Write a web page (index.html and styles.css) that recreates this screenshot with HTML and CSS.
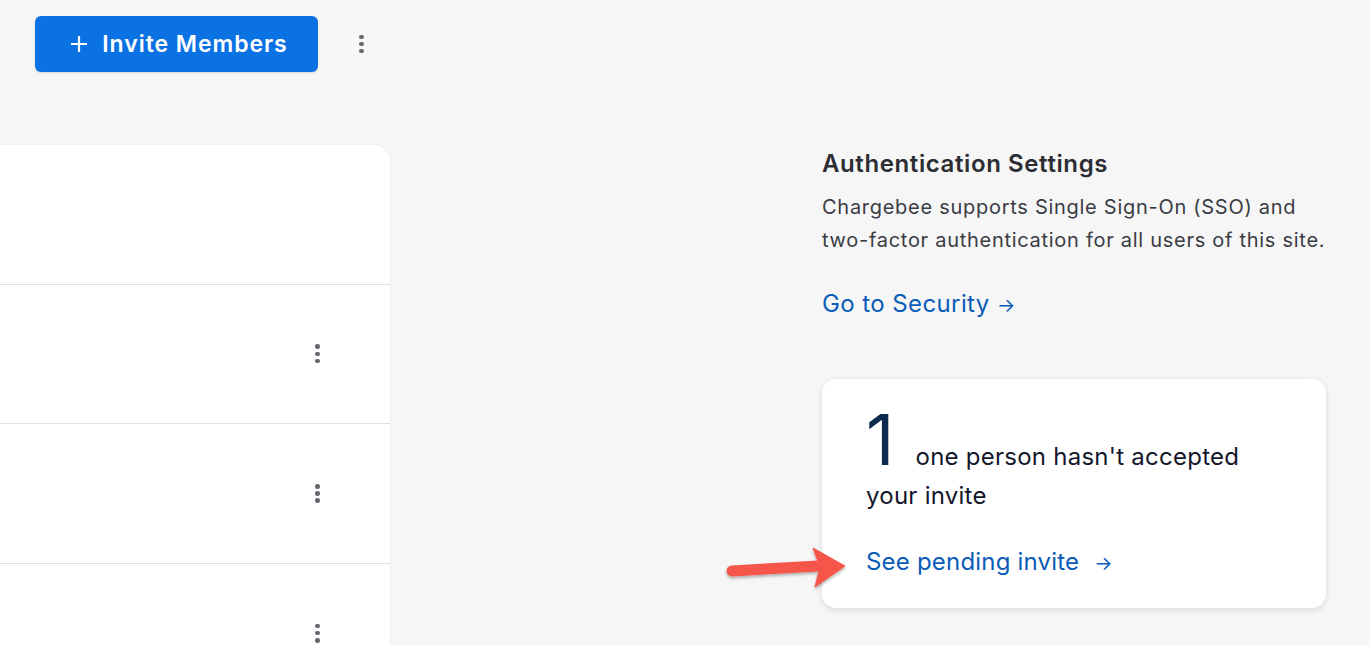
FILE: index.html
```html
<!DOCTYPE html>
<html>
<head>
<meta charset="utf-8">
<link rel="stylesheet" href="styles.css">
</head>
<body>
<div class="page">
  <div class="topbar">
    <button class="invite-btn">
      <svg class="plus" width="18" height="18" viewBox="0 0 18 18"><path d="M9 1v16M1 9h16" stroke="#fff" stroke-width="2.2" fill="none"/></svg>
      <span>Invite Members</span>
    </button>
    <div class="kebab top-kebab"><i></i><i></i><i></i></div>
  </div>
  <div class="main">
    <div class="members-card">
      <div class="row head-row"></div>
      <div class="row"><div class="kebab"><i></i><i></i><i></i></div></div>
      <div class="row"><div class="kebab"><i></i><i></i><i></i></div></div>
      <div class="row"><div class="kebab"><i></i><i></i><i></i></div></div>
    </div>
    <div class="side">
      <h2 class="side-title">Authentication Settings</h2>
      <p class="side-text">Chargebee supports Single Sign-On (SSO) and two-factor authentication for all users of this site.</p>
      <a class="link security-link">Go to Security <span class="arr">&rarr;</span></a>
      <div class="pending-card">
        <p class="pending-text"><span class="big">1</span> one person hasn't accepted your invite</p>
        <a class="link pending-link">See pending invite <span class="arr">&rarr;</span></a>
      </div>
    </div>
  </div>
  <svg class="annot" width="140" height="60" viewBox="0 0 140 60">
    <defs><filter id="sh" x="-20%" y="-30%" width="140%" height="160%"><feDropShadow dx="0" dy="2" stdDeviation="1.5" flood-color="#000" flood-opacity="0.3"/></filter></defs>
    <g filter="url(#sh)" fill="#f5574a" stroke="#f5574a">
      <path d="M12 31 L98 26" stroke-width="11" stroke-linecap="round" fill="none"/>
      <path d="M93 8 L125 26 L95 47 L100 27 Z" stroke-width="1" stroke-linejoin="round"/>
    </g>
  </svg>
</div>
</body>
</html>
```
FILE: styles.css
```css
html, body {
  margin: 0;
  padding: 0;
  background: #f6f6f6;
  font-family: Inter, "Noto Sans", sans-serif;
  overflow: hidden;
}
.page {
  position: relative;
  width: 1370px;
  height: 646px;
  overflow: hidden;
}
.topbar {
  display: flex;
  align-items: center;
  padding: 16px 0 0 35px;
  gap: 41px;
}
.invite-btn {
  width: 283px;
  height: 56px;
  display: flex;
  align-items: center;
  justify-content: center;
  gap: 14px;
  background: #0b72e3;
  color: #fff;
  border: none;
  border-radius: 6px;
  font-family: Inter, sans-serif;
  font-size: 23px;
  font-weight: 600;
  letter-spacing: 0.95px;
  box-shadow: 0 1px 2px rgba(0,0,0,0.12);
  padding: 0 0 0 5px;
}
.kebab {
  display: flex;
  flex-direction: column;
  gap: 2.6px;
  width: 5px;
}
.kebab i {
  display: block;
  width: 4.6px;
  height: 4.6px;
  border-radius: 50%;
  background: #64676f;
}
.main {
  display: flex;
  margin-top: 73px;
}
.members-card {
  width: 390px;
  height: 520px;
  background: #fff;
  border-radius: 0 16px 0 0;
  box-shadow: 0 0 3px rgba(0,0,0,0.06);
  flex-shrink: 0;
}
.row {
  height: 138.6px;
  border-bottom: 1px solid #dedfe3;
  display: flex;
  align-items: center;
  justify-content: flex-end;
  padding-right: 70px;
}
.side {
  margin-left: 432px;
  width: 510px;
  padding-top: 5px;
}
.side-title {
  margin: 0;
  font-size: 24px;
  font-weight: 600;
  color: #2c2d33;
  line-height: 28px;
  letter-spacing: 0.6px;
}
.side-text {
  margin: 13px 0 0;
  font-size: 20px;
  line-height: 33px;
  color: #3a3c44;
  letter-spacing: 0.72px;
}
.link {
  color: #0a5cb8;
  text-decoration: none;
  display: inline-block;
}
.arr {
  font-size: 0.8em;
}
.security-link {
  margin-top: 32px;
  font-size: 24px;
  line-height: 30px;
  letter-spacing: 0.4px;
}
.pending-card {
  margin-top: 59px;
  background: #fff;
  border-radius: 14px;
  box-shadow: 0 2px 6px rgba(0,0,0,0.12);
  padding: 31px 44px 30px;
  height: 229px;
  width: 504px;
  box-sizing: border-box;
}
.pending-text {
  margin: 0;
  font-size: 24px;
  line-height: 39px;
  color: #14172b;
  letter-spacing: 0.25px;
}
.big {
  font-size: 70px;
  line-height: 60px;
  color: #0b2a4d;
  font-weight: 400;
  margin-right: 14px;
  letter-spacing: 0;
}
.pending-link {
  margin-top: 32px;
  font-size: 24px;
  line-height: 30px;
  letter-spacing: 0.2px;
}
.pending-link .arr {
  margin-left: 8px;
}
.annot {
  position: absolute;
  left: 720px;
  top: 540px;
}
```
